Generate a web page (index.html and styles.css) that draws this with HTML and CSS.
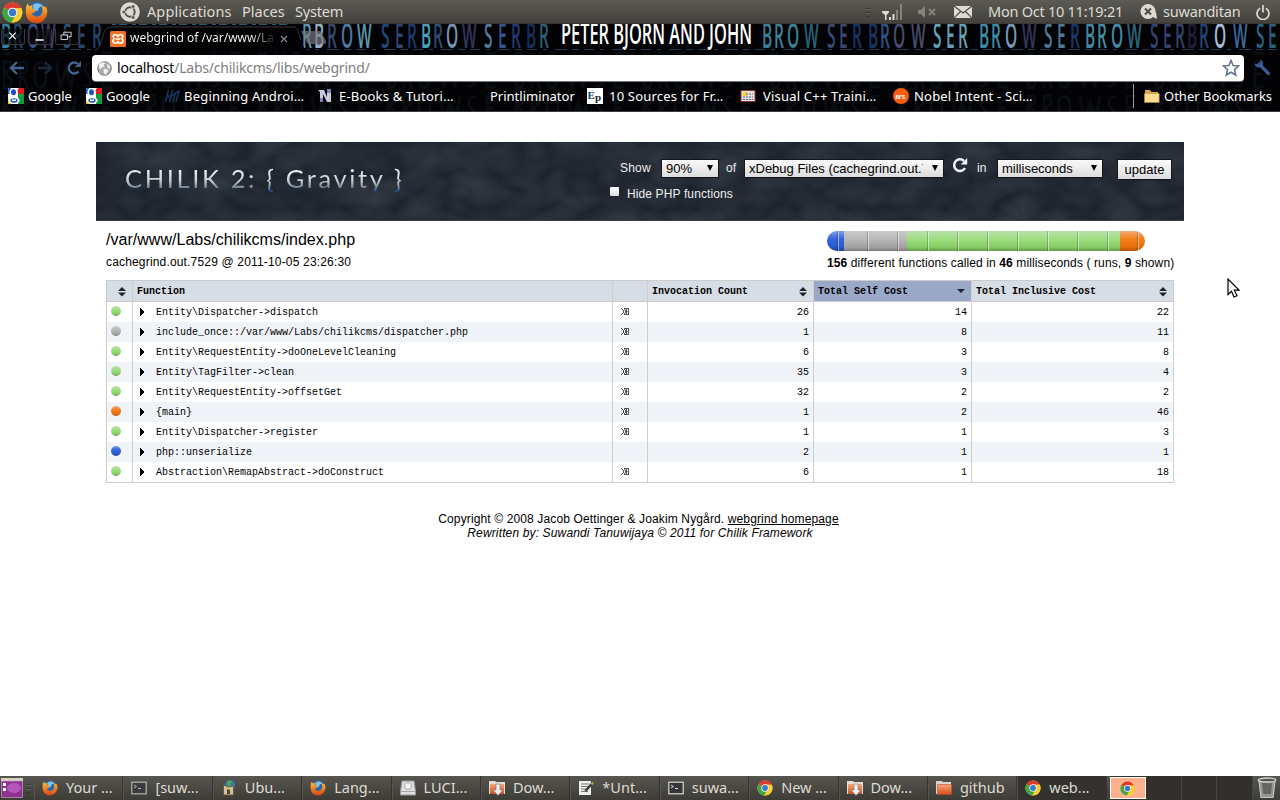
FILE: index.html
```html
<!DOCTYPE html>
<html lang="en">
<head>
<meta charset="utf-8">
<title>webgrind of /var/www/Labs</title>
<link rel="stylesheet" href="styles.css">
</head>
<body>
<svg class="defs" width="0" height="0">
  <defs>
    <linearGradient id="ff" x1="0" y1="0" x2="0" y2="1"><stop offset="0" stop-color="#ffc23a"/><stop offset="1" stop-color="#d9480f"/></linearGradient>
    <linearGradient id="fold" x1="0" y1="0" x2="0" y2="1"><stop offset="0" stop-color="#f3a57c"/><stop offset="1" stop-color="#d14f1b"/></linearGradient>
    <symbol id="chrome" viewBox="0 0 20 20">
      <circle cx="10" cy="10" r="9.5" fill="#fbce2f"/>
      <path d="M10 10 1.8 5.2A9.5 9.5 0 0 1 18.6 6H10z" fill="#dd3b2e"/>
      <path d="M10 10 1.8 5.2A9.5 9.5 0 0 0 9 19.4L13.6 12z" fill="#3fa648"/>
      <path d="M18.5 6H10v4l3.6 2L9.3 19.5A9.5 9.5 0 0 0 18.5 6z" fill="#fbce2f"/>
      <circle cx="10" cy="10" r="4.6" fill="#f4f6f8"/><circle cx="10" cy="10" r="3.6" fill="#3b78c8"/>
    </symbol>
    <symbol id="firefox" viewBox="0 0 20 20">
      <circle cx="10.5" cy="9" r="8.300" fill="#2866ad"/>
      <path d="M7 3c3-2 7-1 8 1l-3 2-1 3-4-1z" fill="#7fc0ea"/>
      <path d="M1 4.500 2.500 2l1 2.500L6.500 3.500l-.2 3 3.200 1.500-1 2-2.300.7c.5 3 5 4 7.500 1.500 2.300-2.500 1.800-6 0-9 3 1.500 4.300 3 4.500 1.500C20.300 8 19.700 13.500 16 17 12.500 20.500 5 20 2 15 .4 12 .5 7.500 1 4.500z" fill="url(#ff)"/>
    </symbol>
    <symbol id="google" viewBox="0 0 16 16">
      <path fill="#fff" d="M0 0h16v16H0z"/><path fill="#2a66d8" d="M0 0h3v6H0z"/><path fill="#e31b23" d="M9 0h7v6h-6z"/><path fill="#169b3a" d="M10 6h6v10h-6z"/><path fill="#f5bd1c" d="M0 11h4v5H0z"/>
      <path fill="#fff" d="M5 0h6L8.500 3.500 9 6l-3 4-2-1 2-3z"/><circle cx="5.500" cy="4.300" r="4" fill="#fff"/><ellipse cx="5.500" cy="4.300" rx="2.500" ry="3" fill="#1e50c0"/>
      <ellipse cx="6" cy="12.300" rx="5.500" ry="3.700" fill="#fff"/><ellipse cx="6" cy="12.500" rx="3.700" ry="2.300" fill="#2860cc"/><path fill="#fff" d="M4 11.500h4v1.500H4z"/>
    </symbol>
    <symbol id="terminal" viewBox="0 0 16 16"><path fill="#bbb9b2" d="M0 1.500h16v13H0z"/><path fill="#34363a" d="M1.500 3h13v10h-13z"/><path d="m3 5 2.500 1.500L3 8M7 8.500h3" fill="none" stroke="#ddd"/></symbol>
    <symbol id="dload" viewBox="0 0 16 16"><path fill="#e8dcd2" d="M0 1h6l1 1h9v12H0z"/><path fill="url(#fold)" d="M1 4h14v10H1z"/><path fill="#eee" stroke="#777" stroke-width=".6" d="M7 4h4v6h3l-5 5.500L4 10h3z"/></symbol>
    <symbol id="folder" viewBox="0 0 16 16"><path fill="#ded2c8" d="M0 1h6l1 1h8v12H0z"/><path fill="url(#fold)" stroke="#c24f21" stroke-width=".6" d="M1.500 4.500h14v10H1.500z"/></symbol>
    <symbol id="sort" viewBox="0 0 8 10"><path fill="#20242b" d="M0 4h8L4 0zM0 5.500h8L4 9.500z"/></symbol>
    <symbol id="tri" viewBox="0 0 4 8"><path d="M0 0h1v1h1v1h1v1h1v2H3v1H2v1H1v1H0z" shape-rendering="crispEdges"/></symbol>
    <symbol id="open" viewBox="0 0 8 7"><path fill="#555" shape-rendering="crispEdges" d="M0 0h1v1H0zM1 1h1v1H1zM2 2h1v3H2zM1 5h1v1H1zM0 6h1v1H0zM3 0h5v1H3zM3 1h1v1H3zM3 5h1v1H3zM3 6h5v1H3zM4 2h1v3H4zM5 1h1v5H5zM7 1h1v5H7z"/><path fill="#999" d="M6 3h1v1H6z"/></symbol>
  </defs>
</svg>

<div class="panel">
  <svg class="i-chrome"><use href="#chrome"/></svg>
  <svg class="i-ff"><use href="#firefox"/></svg>
  <svg class="i-ubuntu" viewBox="0 0 20 20"><circle cx="10" cy="10" r="9.800" fill="#dfdbd2"/><circle cx="10" cy="10" r="4.700" fill="none" stroke="#55534e" stroke-width="2"/><path d="m10 10-6-.1M10 10l3.500-6M10 10l3.500 6" stroke="#dfdbd2" stroke-width="1.200"/><g fill="#55534e" stroke="#dfdbd2" stroke-width=".7"><circle cx="3.800" cy="10" r="1.800"/><circle cx="13.200" cy="4.600" r="1.800"/><circle cx="13.200" cy="15.400" r="1.800"/></g></svg>
  <span class="m1">Applications</span><span class="m2">Places</span><span class="m3">System</span>
  <span class="grip"></span>
  <svg class="i-signal" viewBox="0 0 20 16"><path fill="#dfdbd2" d="M0 7h7v1.500L4.500 11v5h-1.500v-5L0 8.500zM7 13h2v3H7zM10.500 10h2v6h-2z"/><path fill="#85837c" d="M14 6h2v10h-2zM18 0h2v16h-2z"/></svg>
  <svg class="i-mute" viewBox="0 0 18 12"><path fill="#85837c" d="M0 4h3l4-4v12L3 8H0z"/><path d="m11 3 6 6m0-6-6 6" stroke="#85837c" stroke-width="1.800"/></svg>
  <svg class="i-mail" viewBox="0 0 18 12"><path fill="#dfdbd2" d="M0 0h18v12H0z"/><path d="m0 0 9 7 9-7M0 12l6.500-6.500M18 12l-6.500-6.500" fill="none" stroke="#4c4b46" stroke-width="1.200"/></svg>
  <span class="clock">Mon Oct 10 11:19:21</span>
  <svg class="i-chat" viewBox="0 0 17 16"><circle cx="8" cy="7.500" r="7.500" fill="#dfdbd2"/><path fill="#dfdbd2" d="m11 12 5-4 1 7z"/><path d="m5 4.500 6 6m0-6-6 6" stroke="#4c4b46" stroke-width="2"/></svg>
  <span class="user">suwanditan</span>
  <svg class="i-power" viewBox="0 0 14 15"><path d="M4.200 3.200a6 6 0 1 0 5.600 0M7 0v7.500" fill="none" stroke="#dfdbd2" stroke-width="1.700"/></svg>
</div>

<div class="browser">
  <svg class="theme" viewBox="0 0 1280 88" width="1280" height="88">
    <defs><pattern id="ghost" width="128" height="34" patternUnits="userSpaceOnUse"><path d="M4 30V4h6l1 6-6 5 7 7-3 8zM20 30V4h6l1 8-6 4 7 14M38 5c7-2 8 4 8 12s-2 13-7 12-6-23-1-24M56 4l4 25 6-18 5 18 5-25M92 5c-8 0-9 7-4 12s3 12-5 11M112 4h-9v25h9M103 16h7" fill="none" stroke="#090e14" stroke-width="2.500"/></pattern></defs>
    <path d="M0 28h1280v60H0z" fill="url(#ghost)"/>
    <g class="letters" transform="scale(1 2.200)">
      <text y="11" x="1 13 27 41 63 77 92"><tspan fill="#35809a">B</tspan><tspan fill="#26466c">R</tspan><tspan fill="#35548c">O</tspan><tspan fill="#3c4064">W</tspan><tspan fill="#2c5470">S</tspan><tspan fill="#284268">E</tspan><tspan fill="#26446c">R</tspan></text>
      <text y="11" x="302 314 327 341 357 381 395 407 421"><tspan fill="#5a94b4">R</tspan><tspan fill="#8fb4c4">B</tspan><tspan fill="#33496e">R</tspan><tspan fill="#4a78a4">O</tspan><tspan fill="#5a98b0">W</tspan><tspan fill="#204878">S</tspan><tspan fill="#34466c">E</tspan><tspan fill="#1c3a6c">R</tspan><tspan fill="#4ba0ba">B</tspan></text>
      <text y="11" x="433 446 462 484 498 511 526 539"><tspan fill="#2c4c74">R</tspan><tspan fill="#7594b8">O</tspan><tspan fill="#33365a">W</tspan><tspan fill="#507898">S</tspan><tspan fill="#34548c">E</tspan><tspan fill="#23386c">R</tspan><tspan fill="#182f5c">B</tspan><tspan fill="#286078">R</tspan></text>
      <text class="artist" y="9.300" x="561" textLength="191" lengthAdjust="spacingAndGlyphs">PETER BJORN AND JOHN</text>
      <text y="11" x="762 774 787 804 827 839 852 868 880 893 911 933 946 958"><tspan fill="#3a8098">BRO</tspan><tspan fill="#286078">W</tspan><tspan fill="#3a4870">SE</tspan><tspan fill="#183462">RB</tspan><tspan fill="#2c5488">R</tspan><tspan fill="#4a4c6c">OW</tspan><tspan fill="#64a0ba">SER</tspan></text>
      <text y="11" x="979 991 1005 1022 1044 1057 1070 1085 1097 1111 1127 1150 1163 1175 1187 1199 1214 1233 1256 1268"><tspan fill="#3c8aa4">BR</tspan><tspan fill="#7898b8">O</tspan><tspan fill="#34365c">W</tspan><tspan fill="#4c7894">SE</tspan><tspan fill="#18386c">R</tspan><tspan fill="#428aa4">BRO</tspan><tspan fill="#286878">W</tspan><tspan fill="#35416c">SER</tspan><tspan fill="#241b3c">B</tspan><tspan fill="#244474">R</tspan><tspan fill="#a0bdd4">O</tspan><tspan fill="#3a6898">W</tspan><tspan fill="#286080">SE</tspan></text>
    </g>
    <path d="M2 25.500h1275" stroke="#223a54" stroke-width="1" stroke-dasharray="7 5 10 6 4 8 12 5"/>
    <path d="M95 26c8 0 6-23 15-23h184c8 0 6 23 14 23v2H95z" fill="#030306"/>
    <path d="M112 .5h180" stroke="#2c5a70" stroke-dasharray="4 3 8 5"/>
    <path d="M95 26c8 0 6-23 15-23h184c4 0 5 8 7 13" fill="none" stroke="#34343a"/>
    <path d="M301 7h20l5 10q1 3-2 3h-14q-3 0-4-3z" fill="#77777d" opacity=".7"/>
  </svg>
  <div class="tabrow">
    <span class="winbtn"><svg viewBox="0 0 24 16"><path d="m8 4 7 7m0-7-7 7" stroke="#fff" stroke-width="1.300"/></svg></span>
    <span class="winbtn w2"><svg viewBox="0 0 24 16"><path d="M7 12h9" stroke="#fff" stroke-width="1.600"/></svg></span>
    <span class="winbtn"><svg viewBox="0 0 24 16"><path d="M8.500 6.500V3.500h8v5h-3M5.500 6.500h7v5h-7z" fill="none" stroke="#ddd"/></svg></span>
    <svg class="i-xampp" viewBox="0 0 16 16"><rect width="16" height="16" rx="1.500" fill="#f36f21"/><path d="M7 4 4.500 3.500 3 5l1 2.500L2.800 10l1.500 2.200L7 12l1-1.500L9 12l2.700.2L13.200 10 12 7.500 13 5l-1.500-1.500L9 4 8 5.500zM5.500 8h5" fill="none" stroke="#fff" stroke-width="1.700" stroke-linejoin="round"/></svg>
    <span class="tabtitle">webgrind of /var/www/Lab</span>
    <svg class="i-close" viewBox="0 0 8 8"><path d="m1 1 6 6m0-6-6 6" stroke="#85858a" stroke-width="1.300"/></svg>
  </div>
  <div class="toolbar">
    <svg class="nav" viewBox="0 0 16 14"><path d="M15 7H2M8 1 2 7l6 6" fill="none" stroke="#46628f" stroke-width="2.300"/></svg>
    <svg class="nav n2" viewBox="0 0 16 14"><path d="M1 7h13M8 1l6 6-6 6" fill="none" stroke="#1c2738" stroke-width="2.300"/></svg>
    <svg class="nav n3" viewBox="0 0 16 14"><path d="M12.500 10.500A5.500 5.500 0 1 1 12 3" fill="none" stroke="#46628f" stroke-width="2.300"/><path d="M15 0v6H9z" fill="#46628f"/></svg>
    <div class="omnibox">
      <svg class="i-globe" viewBox="0 0 16 16"><circle cx="8" cy="8" r="7.300" fill="#aaa" stroke="#777"/><path fill="#f4f4f4" d="M2 4c2-3 6-3 7-2L7 4l1 2-3 1-1 2-2-2zM7 8l4 1 1 2-3 4-2-3zM11 2l3 4-1 3-2-3z"/></svg>
      <span class="url">localhost<i>/Labs/chilikcms/libs/webgrind/</i></span>
      <svg class="i-star" viewBox="0 0 18 18"><path d="m9 1.500 2.200 5 5.400.5-4.100 3.600 1.200 5.400L9 13.200 4.300 16l1.200-5.400L1.400 7l5.400-.5z" fill="#fff" stroke="#65758f" stroke-width="1.600"/></svg>
    </div>
    <svg class="i-wrench" viewBox="0 0 16 16"><path d="M5 5l8.500 8.500" stroke="#3c5c91" stroke-width="3.200" stroke-linecap="round"/><path d="M.5 4.500C1 8 5 9 7.500 7 9.500 5 8.500 1.500 5.500.7L6 4 4 5z" fill="#3c5c91"/></svg>
  </div>
  <div class="bookmarks">
    <div class="bm w78"><svg><use href="#google"/></svg><span>Google</span></div>
    <div class="bm w78"><svg><use href="#google"/></svg><span>Google</span></div>
    <div class="bm w154"><svg viewBox="0 0 16 16"><path d="M4.500 2 1.500 14M8.500 2l-3 12M3 8h4l8-5-3 11M11.500 4 9 14" fill="none" stroke="#183358" stroke-width="1.600"/></svg><span class="wide">Beginning Androi…</span></div>
    <div class="bm w156"><svg viewBox="0 0 16 16"><path fill="#c8cce0" d="M0 2h6l3 7V1h4v13H9L5 6v7H2V4z"/><path fill="#7c84b4" d="M2 10h3v4H2zM9 1h4v4H9z"/></svg><span class="t5 wide">E-Books &amp; Tutori…</span></div>
    <div class="bm w113"><svg></svg><span class="print">Printliminator</span></div>
    <div class="bm w153"><svg class="i-ep" viewBox="0 0 16 16"><path fill="#fff" d="M0 0h16v16H0z"/><text x=".5" y="11" fill="#184078">E</text><text x="8" y="13" fill="#222">p</text></svg><span class="t7 wide">10 Sources for Fr…</span></div>
    <div class="bm w153"><svg viewBox="0 0 16 16"><path fill="#eadfd8" stroke="#963240" d="M1 2.500h14v11H1z"/><path fill="#f5d52a" d="M3 4h4v4H3z"/><path d="M6 6h7M3 9h10M3 11.500h10" stroke="#5664a4" stroke-dasharray="2 1"/></svg><span class="t8 wide">Visual C++ Traini…</span></div>
    <div class="bm w240"><svg class="i-ars" viewBox="0 0 16 16"><circle cx="8" cy="8" r="8" fill="#fa5b0c"/><text x="2.500" y="10.500" fill="#fff">ars</text></svg><span class="t5 wide">Nobel Intent - Sci…</span></div>
    <div class="bm other"><svg viewBox="0 0 16 16"><path fill="#d8a451" d="M1 2h5l1.500 2H14v10H1z"/><path fill="#fbdc92" stroke="#c08b3c" stroke-width=".6" d="M.500 5.500h14.700v9H.500z"/></svg><span>Other Bookmarks</span></div>
  </div>
</div>

<main class="page">
  <header class="head">
    <svg class="texture" width="1088" height="79"><filter id="smoke" x="0" y="0" width="100%" height="100%" color-interpolation-filters="sRGB"><feTurbulence type="turbulence" baseFrequency=".02 .03" numOctaves="2" seed="8"/><feColorMatrix values=".1 .06 0 0 .105  .1 .06 0 0 .132  .1 .06 0 0 .172  0 0 0 0 1"/></filter><rect width="1088" height="79" filter="url(#smoke)"/></svg>
    <div class="logo">CHILIK 2: { Gravity }</div>
    <div class="form">
      <div class="line">
        <span class="l-show">Show</span><span class="select s1">90%<b></b></span><span class="l-of">of</span><span class="select s2"><em>xDebug Files (cachegrind.out.7</em><b></b></span>
        <svg class="i-reload" viewBox="0 0 16 16"><path d="M13 11A5.800 5.800 0 1 1 12 4" fill="none" stroke="#f2f2f2" stroke-width="2.500"/><path d="M15.200 1v6.500H8.700z" fill="#f2f2f2"/></svg>
        <span class="l-in">in</span><span class="select s3">milliseconds<b></b></span><span class="button">update</span>
      </div>
      <div class="line2"><span class="check"></span>Hide PHP functions</div>
    </div>
  </header>
  <section class="summary">
    <div><h1>/var/www/Labs/chilikcms/index.php</h1><p class="stamp">cachegrind.out.7529 @ 2011-10-05 23:26:30</p></div>
    <div class="right"><div class="bar"><i class="blue"></i><i class="gray"></i><i class="green"></i><i class="orange"></i></div><p><strong>156</strong> different functions called in <strong>46</strong> milliseconds ( runs, <strong>9</strong> shown)</p></div>
  </section>
  <div class="table">
    <div class="row th"><span><svg class="sort"><use href="#sort"/></svg></span><span>Function</span><span></span><span>Invocation Count<svg class="sort"><use href="#sort"/></svg></span><span class="sel">Total Self Cost<svg class="down" viewBox="0 0 8 4"><path d="M0 0h8L4 4z" fill="#20242b"/></svg></span><span>Total Inclusive Cost<svg class="sort"><use href="#sort"/></svg></span></div>
    <div class="row"><span><i class="dot green"></i></span><span><svg class="tri"><use href="#tri"/></svg>Entity\Dispatcher-&gt;dispatch</span><span><svg class="open"><use href="#open"/></svg></span><span>26</span><span>14</span><span>22</span></div>
    <div class="row alt"><span><i class="dot gray"></i></span><span><svg class="tri"><use href="#tri"/></svg>include_once::/var/www/Labs/chilikcms/dispatcher.php</span><span><svg class="open"><use href="#open"/></svg></span><span>1</span><span>8</span><span>11</span></div>
    <div class="row"><span><i class="dot green"></i></span><span><svg class="tri"><use href="#tri"/></svg>Entity\RequestEntity-&gt;doOneLevelCleaning</span><span><svg class="open"><use href="#open"/></svg></span><span>6</span><span>3</span><span>8</span></div>
    <div class="row alt"><span><i class="dot green"></i></span><span><svg class="tri"><use href="#tri"/></svg>Entity\TagFilter-&gt;clean</span><span><svg class="open"><use href="#open"/></svg></span><span>35</span><span>3</span><span>4</span></div>
    <div class="row"><span><i class="dot green"></i></span><span><svg class="tri"><use href="#tri"/></svg>Entity\RequestEntity-&gt;offsetGet</span><span><svg class="open"><use href="#open"/></svg></span><span>32</span><span>2</span><span>2</span></div>
    <div class="row alt"><span><i class="dot orange"></i></span><span><svg class="tri"><use href="#tri"/></svg>{main}</span><span><svg class="open"><use href="#open"/></svg></span><span>1</span><span>2</span><span>46</span></div>
    <div class="row"><span><i class="dot green"></i></span><span><svg class="tri"><use href="#tri"/></svg>Entity\Dispatcher-&gt;register</span><span><svg class="open"><use href="#open"/></svg></span><span>1</span><span>1</span><span>3</span></div>
    <div class="row alt"><span><i class="dot blue"></i></span><span><svg class="tri"><use href="#tri"/></svg>php::unserialize</span><span></span><span>2</span><span>1</span><span>1</span></div>
    <div class="row"><span><i class="dot green"></i></span><span><svg class="tri"><use href="#tri"/></svg>Abstraction\RemapAbstract-&gt;doConstruct</span><span><svg class="open"><use href="#open"/></svg></span><span>6</span><span>1</span><span>18</span></div>
  </div>
  <footer><div class="copy">Copyright © 2008 Jacob Oettinger &amp; Joakim Nygård. <u>webgrind homepage</u></div><em>Rewritten by: Suwandi Tanuwijaya © 2011 for Chilik Framework</em></footer>
</main>

<div class="taskbar">
  <svg class="i-desk" viewBox="0 0 22 20"><path fill="#d8d0c0" d="M0 0h22v3H0z"/><path fill="#8d3291" stroke="#ccb0cc" stroke-width=".6" d="M.500 3h21v16.500H.500z"/><ellipse cx="13" cy="10" rx="7" ry="5" fill="#c566c9" opacity=".7"/><path fill="#fff" d="M2 5h3v3H2zM2 10h3v3H2z"/></svg>
  <span class="grip"></span>
  <div class="task"><svg><use href="#firefox"/></svg><span>Your ...</span></div>
  <div class="task"><svg opacity=".75"><use href="#terminal"/></svg><span>[suw...</span></div>
  <div class="task"><svg viewBox="0 0 16 16"><circle cx="9" cy="5" r="5" fill="#3979b8"/><path fill="#57a844" d="M6 1h5l-2 4 4 2-5 2z"/><path fill="#cfc09a" stroke="#6b5b3c" d="m2.500 5 5 2 5-1v9h-10z"/><path d="M6 14V9l3 1v4" fill="#54452c"/></svg><span>Ubu...</span></div>
  <div class="task"><svg><use href="#firefox"/></svg><span>Lang...</span></div>
  <div class="task"><svg viewBox="0 0 16 16"><path fill="#dedede" stroke="#999" d="M2 1h12l1.500 10v4H.500v-4z"/><path fill="none" stroke="#aaa" d="M1 11.500h14"/><circle cx="8" cy="6" r="3.500" fill="#f4f4f4" stroke="#aaa"/></svg><span>LUCI...</span></div>
  <div class="task"><svg><use href="#dload"/></svg><span>Dow...</span></div>
  <div class="task"><svg viewBox="0 0 16 16"><path fill="#eee" d="M1 1h12v14H1z"/><path d="M3 4h8M3 6.500h7M3 9h5M3 11.500h7" stroke="#777"/><path d="m14.500 3-7 8" stroke="#3c3c34" stroke-width="2.500"/><path d="m15 2.500-1.500 2" stroke="#c8b430" stroke-width="2"/></svg><span>*Unt...</span></div>
  <div class="task"><svg><use href="#terminal"/></svg><span>suwa...</span></div>
  <div class="task"><svg><use href="#chrome"/></svg><span>New ...</span></div>
  <div class="task"><svg><use href="#dload"/></svg><span>Dow...</span></div>
  <div class="task"><svg><use href="#folder"/></svg><span>github</span></div>
  <div class="task active"><svg><use href="#chrome"/></svg><span>web...</span></div>
  <div class="pager"><span class="on"><svg><use href="#chrome"/></svg></span><span></span><span></span><span></span></div>
  <svg class="i-trash" viewBox="0 0 20 22"><path fill="#a5a6a2" opacity=".85" d="m1.500 3 2 18h13l2-18z"/><path fill="#656660" d="m5 6 1 11h8l1-11z"/><path d="m2 4 2 16.500h12L18 4" fill="none" stroke="#c4c5c0"/><ellipse cx="10" cy="3" rx="8.800" ry="2" fill="#555" stroke="#d0d1cd" stroke-width="1.300"/></svg>
</div>

<svg class="cursor" viewBox="0 0 13 20"><path d="M1 1v15.500l3.500-3.300L7 19l3-1.200-2.600-5.600H12z" fill="#fff" stroke="#000" stroke-width="1.200"/></svg>
</body>
</html>
```
FILE: styles.css
```css
* { box-sizing: border-box; }
body { margin: 0; width: 1280px; height: 800px; overflow: hidden; display: flex; flex-direction: column; background: #fff; color: #000; font: 12px "Liberation Sans", sans-serif; position: relative; }
svg { flex: none; display: block; }
.defs { position: absolute; }
p, h1 { margin: 0; font-weight: normal; }

/* desktop panel */
.panel { height: 24px; flex: none; display: flex; align-items: center; background: linear-gradient(#5b5a54, #42413c 94%, #33322e); color: #dfdbd2; font: 14.5px/22px "Noto Sans", sans-serif; white-space: nowrap; }
.panel span:not(.grip) { margin-top: -2px; }
.i-chrome { width: 21px; height: 21px; margin-left: 2px; }
.i-ff { width: 23px; height: 23px; margin-left: 2px; }
.i-ubuntu { width: 20px; height: 20px; margin-left: 72px; }
.m1 { width: 95px; margin-left: 7px; letter-spacing: .1px; }
.m2 { width: 53px; letter-spacing: 0; }
.m3 { width: 571px; letter-spacing: -.2px; }
.grip { width: 4px; height: 9px; background: repeating-linear-gradient(#36352f 0 1px, #66645c 1px 2px, transparent 2px 4px); }
.i-signal { width: 20px; height: 16px; margin-left: 12px; }
.i-mute { width: 18px; height: 12px; margin-left: 16px; }
.i-mail { width: 18px; height: 12px; margin-left: 18px; }
.clock { width: 152px; margin-left: 16px; letter-spacing: -.25px; }
.i-chat { width: 17px; height: 16px; }
.user { width: 86px; margin-left: 6px; letter-spacing: -.2px; }
.i-power { width: 14px; height: 15px; margin-left: 7px; }

/* browser frame */
.browser { height: 88px; flex: none; background: #030305; position: relative; border-bottom: 1px solid #3c3c40; color: #fff; overflow: hidden; }
.theme { position: absolute; left: 0; top: 0; }
.letters { font: 600 15.5px "Open Sans", sans-serif; }
.letters .artist { font: 600 13px "Open Sans", sans-serif; fill: #fff; }
.tabrow, .toolbar, .bookmarks { position: relative; display: flex; align-items: center; }
.tabrow { height: 28px; padding: 0 0 2px 1px; }
.winbtn { width: 24px; height: 16px; border: 1px solid #37373c; border-top: 0; border-radius: 0 0 3px 3px; background: #08080b99; margin: -1px 3px 0 0; }
.i-xampp { width: 16px; height: 16px; margin: 3px 0 0 28px; }
.tabtitle { width: 143px; margin: 2px 0 0 4px; overflow: hidden; white-space: nowrap; font: 12px/20px "Noto Sans", sans-serif; letter-spacing: 0; background: linear-gradient(90deg, #fff 84%, #222 100%); -webkit-background-clip: text; background-clip: text; color: transparent; }
.i-close { width: 8px; height: 8px; margin: 3px 0 0 7px; }
.toolbar { height: 31px; padding-left: 9px; }
.nav { width: 16px; height: 14px; }
.n2 { margin-left: 12px; }
.n3 { margin-left: 13px; }
.omnibox { margin: 1px 0 0 10px; width: 1152px; height: 26px; background: #fff; border-radius: 4px; display: flex; align-items: center; padding: 0 4px 0 5px; box-shadow: 0 1px 0 #77787c; }
.i-globe { width: 15px; height: 15px; }
.url { flex: 1; margin-left: 5px; color: #000; font: 14px/24px "Noto Sans", sans-serif; letter-spacing: -.22px; }
.url i { font-style: normal; color: #808080; }
.i-star { width: 18px; height: 18px; }
.i-wrench { width: 17px; height: 17px; margin-left: 10px; }
.bookmarks { height: 28px; padding-left: 8px; font: 13px/26px "Noto Sans", sans-serif; white-space: nowrap; margin-top: -1px; }
.bm { display: flex; align-items: center; gap: 4px; }
.bm svg { width: 16px; height: 16px; }
.bm .wide { letter-spacing: .2px; }
.bm .print { margin-left: -4px; }
.bm .t5 { margin-left: 1px; }
.bm .t7 { margin-left: 2px; }
.bm .t8 { margin-left: 3px; }
.w78 { width: 78px; } .w154 { width: 154px; } .w156 { width: 156px; } .w113 { width: 113px; } .w153 { width: 153px; } .w240 { width: 240px; }
.i-ep { font: bold 11px "Liberation Serif", serif; }
.i-ars { font: bold 6.5px "Liberation Sans", sans-serif; }
.other { height: 24px; border-left: 1px solid #9a9aa8; padding-left: 10px; }

/* profiler page */
.page { flex: 1; padding: 30px 96px 0; }
.head { height: 79px; position: relative; display: flex; background: #20272f; border-bottom: 1px solid #3a3c42; overflow: hidden; }
.texture { position: absolute; left: 0; top: 0; }
.logo { position: relative; width: 485px; margin: 17px 0 0 29px; height: 38px; font: 400 25.500px/38px Lato, sans-serif; letter-spacing: 2.620px; white-space: pre; background: linear-gradient(#eee 30%, #c8cacc 58%, #6d8296 76%, #1d4587 86%); -webkit-background-clip: text; background-clip: text; color: transparent; }
.form { position: relative; flex: 1; color: #eee; }
.line { height: 36px; padding: 17px 0 0 10px; display: flex; align-items: flex-start; line-height: 19px; }
.l-show { width: 41px; letter-spacing: .2px; }
.l-of { margin-left: 7px; width: 18px; }
.l-in { margin-left: 9px; width: 20px; }
.select, .button { height: 19px; border: 1px solid #14161b; background: linear-gradient(#fafafa, #dcdcdc); background-clip: padding-box; color: #000; font-size: 13px; line-height: 17px; }
.select { position: relative; padding-left: 4px; white-space: nowrap; display: block; }
.select em { font-style: normal; display: block; width: 174px; overflow: hidden; }
.select b { position: absolute; right: 5px; top: 5px; border: solid transparent; border-width: 6px 3.5px 0; border-top-color: #000; }
.s1 { width: 58px; } .s2 { width: 200px; } .s3 { width: 106px; }
.i-reload { width: 16px; height: 16px; margin: -2px 0 0 8px; }
.button { width: 55px; height: 21px; margin-left: 14px; text-align: center; line-height: 19px; }
.line2 { display: flex; align-items: center; line-height: 16px; padding-top: 8px; letter-spacing: .12px; }
.check { width: 9px; height: 9px; margin: -5px 8px 0 0; background: linear-gradient(#fff, #ddd); border-radius: 1px; }
.summary { display: flex; justify-content: space-between; padding: 10px 10px 0; height: 59px; }
.summary h1 { font-size: 16px; line-height: 18px; letter-spacing: .03px; }
.summary p { line-height: 14px; margin-top: 6px; letter-spacing: .11px; }
.summary .stamp { letter-spacing: .17px; }
.right { width: 347px; white-space: nowrap; }
.bar { width: 318px; height: 20px; border-radius: 10px; overflow: hidden; display: flex; position: relative; }
.bar i { height: 20px; }
.bar .blue { width: 17px; } .bar .gray { width: 63px; } .bar .green { width: 213px; } .bar .orange { width: 25px; }
.bar::after { content: ""; position: absolute; inset: 0; background: repeating-linear-gradient(90deg, transparent 0 10px, #0003 10px 11px, #fff7 11px 12px, transparent 12px 30px); }
.blue { background: linear-gradient(#7f9fe4, #3565dc 40%, #2a5bd0 75%, #1c439c); }
.gray { background: linear-gradient(#cacaca, #b4b4b4 50%, #9d9d9d 85%, #777); }
.green { background: linear-gradient(#bce0ae, #9bdd7c 45%, #86cc66 80%, #639c4a); }
.orange { background: linear-gradient(#f2ab77, #f57f1d 40%, #e96f08 80%, #ad5206); }
.summary .bar + p { margin-top: 5px; }
.table { margin: 0 10px; border: 1px solid #ccc; border-right: 0; font: 10px/20px "Liberation Mono", monospace; }
.row { display: grid; grid-template-columns: 26px 480px 35px 166px 158px 202px; height: 20px; }
.row > span { border-right: 1px solid #d0d0d0; padding: 0 4px; display: flex; align-items: center; justify-content: flex-end; line-height: 19px; white-space: nowrap; }
.row > span:nth-child(-n+2) { justify-content: flex-start; }
.row > span:nth-child(3) { justify-content: flex-start; padding-left: 8px; }
.alt { background: #f0f4f9; }
.th { height: 21px; background: #d6dde5; border-bottom: 1px solid #ccc; font-weight: bold; }
.row.th > span { justify-content: space-between; padding-right: 6px; }
.row.th > span:first-child { justify-content: flex-end; }
.th .sel { background: #9ba9c8; }
.sort { width: 8px; height: 10px; margin-top: 1px; }
.down { width: 8px; height: 4px; }
.dot { width: 10px; height: 10px; border-radius: 50%; margin-top: -2px; }
.tri { width: 4px; height: 8px; margin: -1px 12px 0 3px; }
.open { width: 8px; height: 7px; margin-top: -1px; }
footer { text-align: center; line-height: 14px; padding-top: 29px; letter-spacing: .14px; }
.copy { margin-left: -3px; letter-spacing: .13px; }

/* bottom panel */
.taskbar { height: 24px; flex: none; display: flex; align-items: center; background: linear-gradient(#56554f, #3d3c37); color: #dfdbd2; font: 14.500px/22px "Noto Sans", sans-serif; white-space: nowrap; }
.i-desk { width: 22px; height: 20px; margin-left: 1px; }
.taskbar .grip { margin: 0 3px 0 4px; }
.task { width: 89.4px; height: 24px; padding-left: 7px; display: flex; align-items: center; border-left: 1px solid #55544e; border-right: 1px solid #35342f; letter-spacing: 0; }
.task span { margin-top: -2px; }
.task svg { width: 16px; height: 16px; margin-right: 8px; }
.active { background: #33322e; }
.pager { width: 143px; height: 24px; margin-left: 3px; display: flex; background: #32302e; }
.pager span { flex: 1; border-right: 1px solid #45443f; display: flex; align-items: center; justify-content: center; }
.pager .on { background: #ffb08f; border: 1px solid #fff; height: 22px; margin-top: 1px; }
.pager svg { width: 15px; height: 15px; }
.i-trash { width: 20px; height: 22px; margin-left: 4px; }
.cursor { position: absolute; left: 1227px; top: 278px; width: 13px; height: 20px; }
```
